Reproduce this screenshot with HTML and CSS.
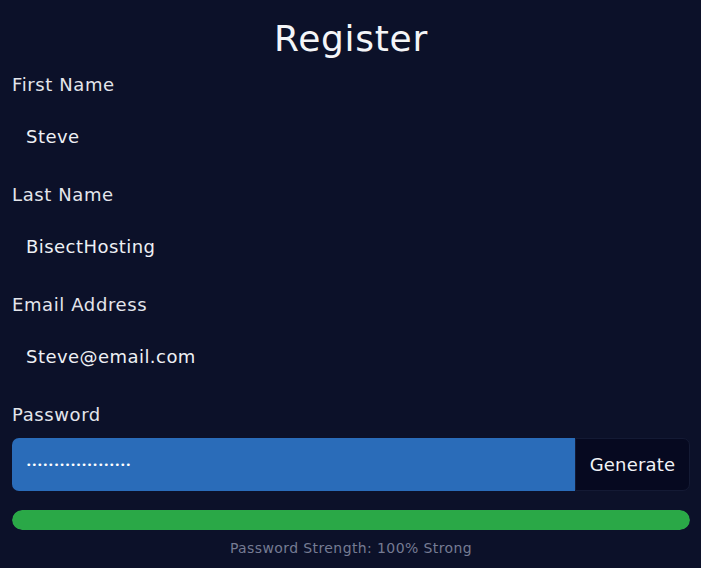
FILE: index.html
```html
<!DOCTYPE html>
<html lang="en">
<head>
<meta charset="utf-8">
<title>Register</title>
<link rel="stylesheet" href="styles.css">
</head>
<body>
<main class="page">
  <h1 class="title">Register</h1>
  <form class="form">
    <div class="group">
      <label class="label" for="fn">First Name</label>
      <input class="field" id="fn" type="text" value="Steve">
    </div>
    <div class="group">
      <label class="label" for="ln">Last Name</label>
      <input class="field" id="ln" type="text" value="BisectHosting">
    </div>
    <div class="group">
      <label class="label" for="em">Email Address</label>
      <input class="field" id="em" type="email" value="Steve@email.com">
    </div>
    <div class="group">
      <label class="label" for="pw">Password</label>
      <div class="pw-row">
        <input class="pw-field" id="pw" type="password" value="abcdefghijklmnopqrs">
        <button class="gen-btn" type="button">Generate</button>
      </div>
    </div>
    <div class="strength-bar"><div class="strength-fill" style="width:100%"></div></div>
    <p class="strength-text">Password Strength: 100% Strong</p>
  </form>
</main>
</body>
</html>
```
FILE: styles.css
```css
* { box-sizing: border-box; }
html, body {
  margin: 0;
  padding: 0;
  background: #0c1129;
}
body {
  font-family: "DejaVu Sans", "Noto Sans", sans-serif;
  color: #e6e8ee;
}
.page {
  padding: 17px 11px 0 12px;
}
.title {
  margin: 0 0 12px 0;
  font-size: 36px;
  line-height: 44px;
  font-weight: 400;
  letter-spacing: 0.7px;
  text-align: center;
  color: #f4f5f8;
}
.form { margin: 0; }
.group { margin-bottom: 19px; }
.label {
  display: block;
  font-size: 18px;
  line-height: 24px;
  letter-spacing: 0.6px;
  margin-bottom: 11px;
  color: #e4e6ec;
}
.field {
  display: block;
  width: 100%;
  height: 56px;
  padding: 0 14px;
  border: none;
  background: transparent;
  color: #eef0f4;
  font-family: inherit;
  font-size: 18px;
  letter-spacing: 0.45px;
  outline: none;
}
.pw-row {
  display: flex;
  height: 53px;
}
.pw-field {
  flex: 1;
  height: 100%;
  border: none;
  border-radius: 7px 0 0 7px;
  background: #2a6cb9;
  color: #ffffff;
  padding: 0 14px;
  font-family: inherit;
  font-size: 9.4px;
  outline: none;
}
.gen-btn {
  width: 115px;
  height: 100%;
  border: 1px solid #141a34;
  border-radius: 0 7px 7px 0;
  background: #060920;
  color: #f2f3f6;
  font-family: inherit;
  font-size: 18px;
  letter-spacing: 0.2px;
  padding: 0;
}
.strength-bar {
  height: 20px;
  border-radius: 10px;
  background: #1a2036;
  overflow: hidden;
}
.strength-fill {
  height: 100%;
  background: #2aa847;
  border-radius: 10px;
}
.strength-text {
  margin: 8px 0 0 0;
  font-size: 14px;
  line-height: 20px;
  letter-spacing: 0.4px;
  text-align: center;
  color: #757b93;
}
```
